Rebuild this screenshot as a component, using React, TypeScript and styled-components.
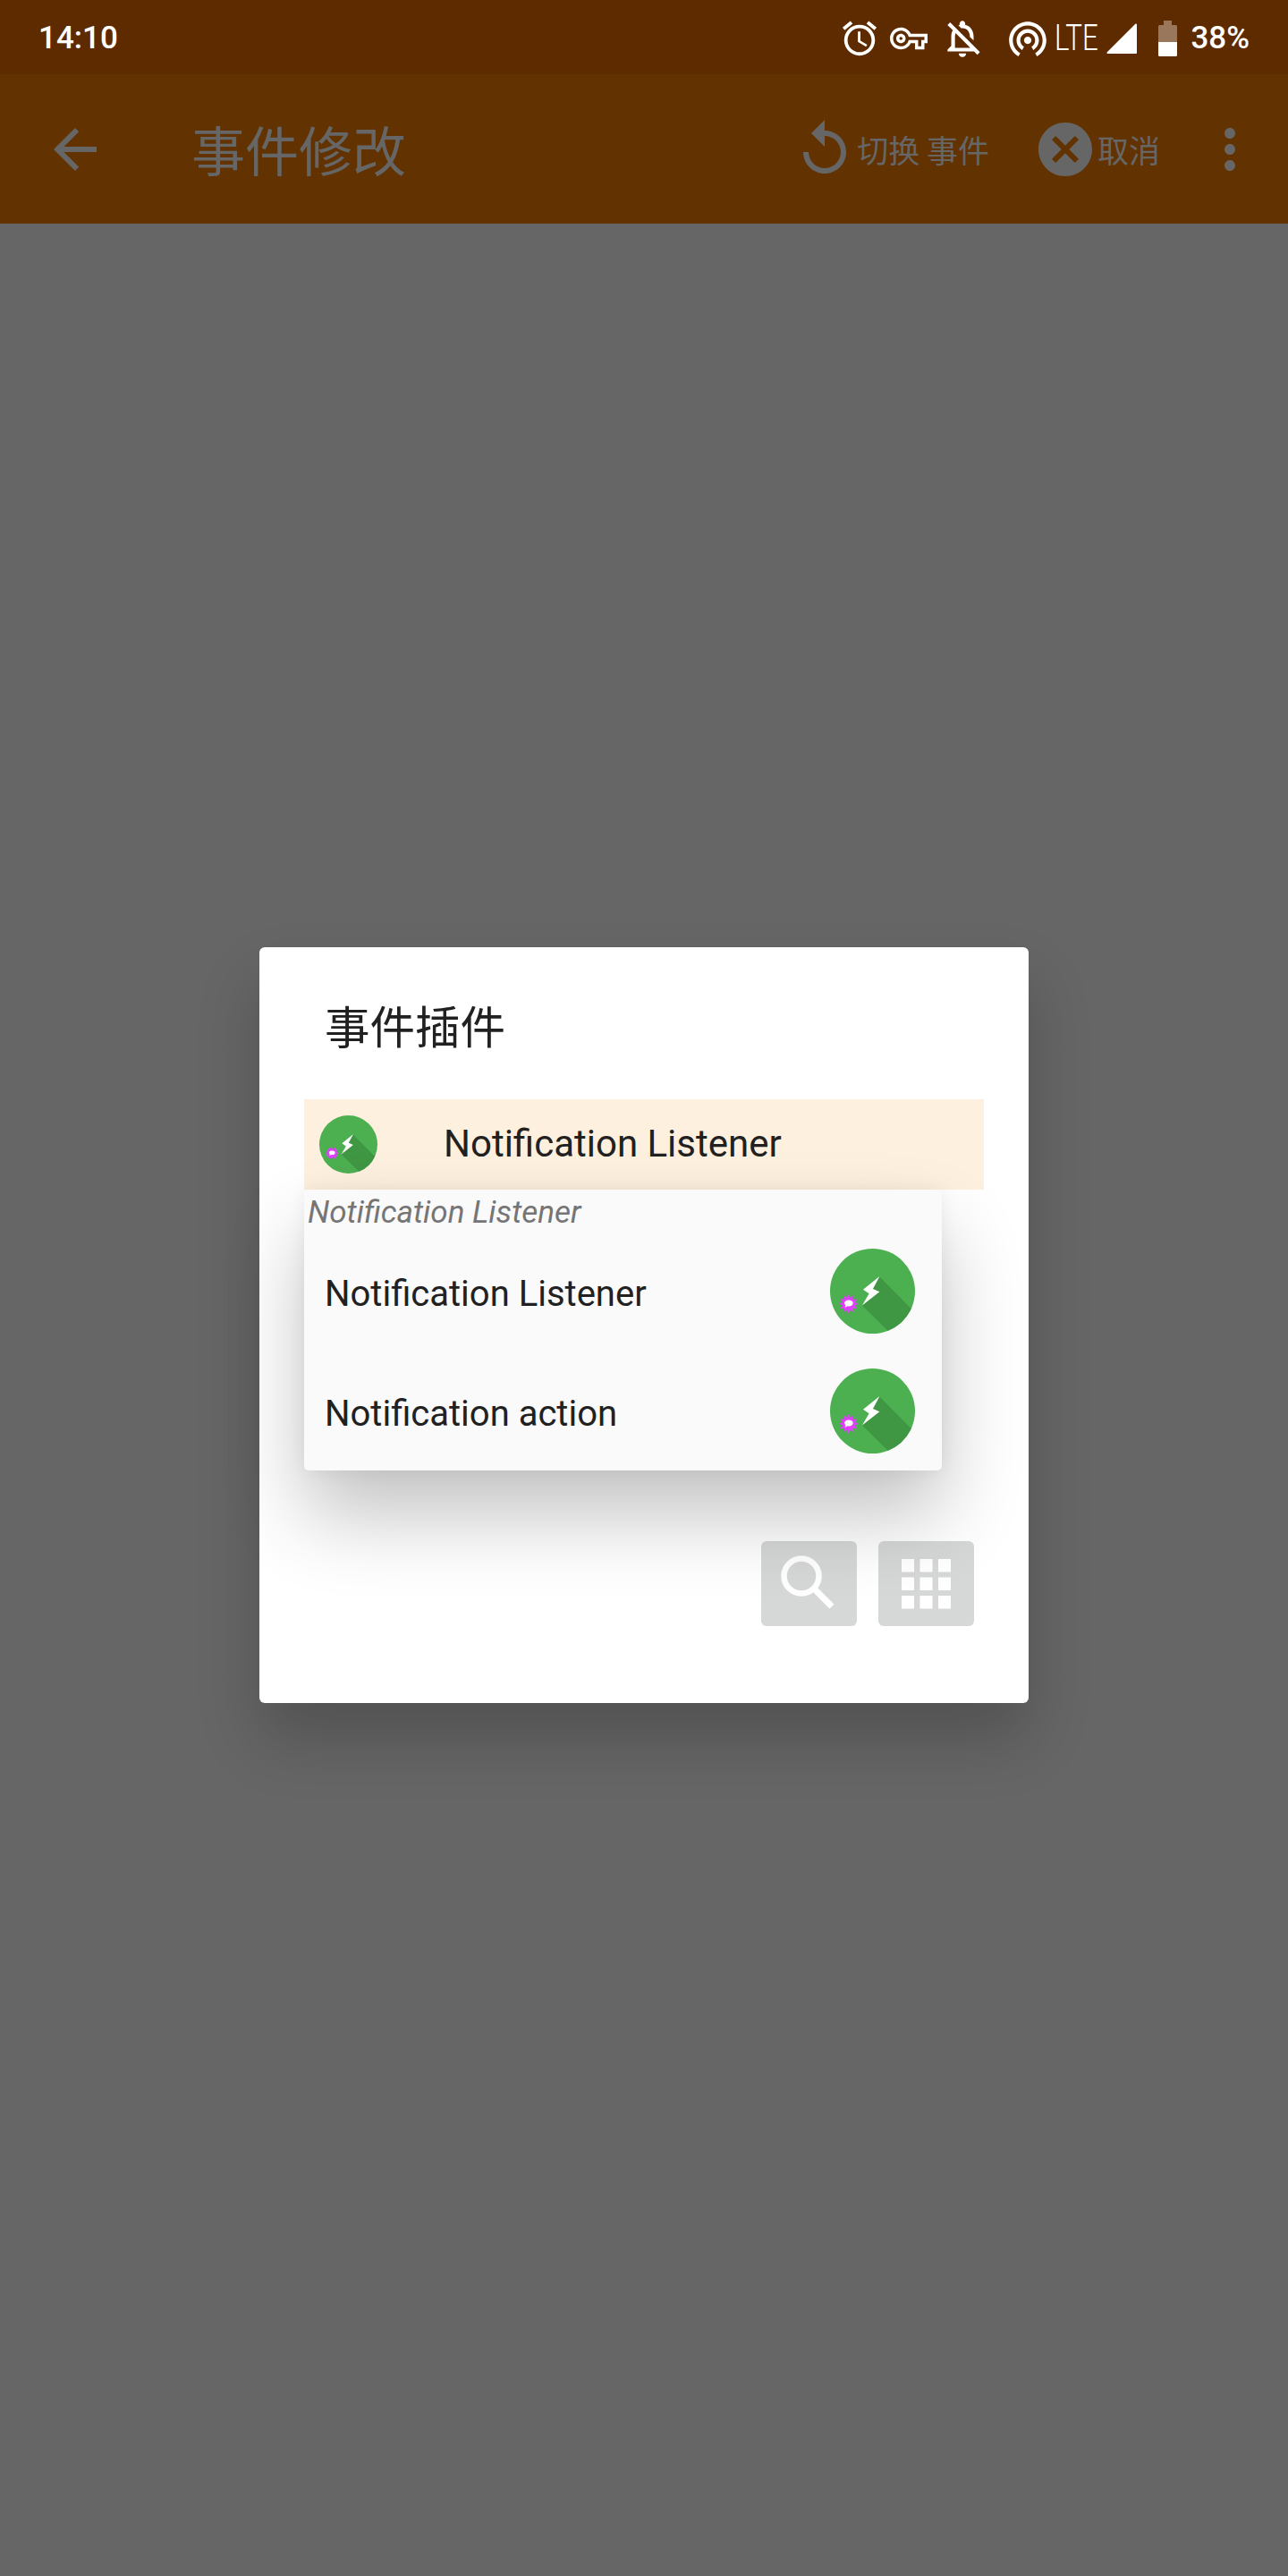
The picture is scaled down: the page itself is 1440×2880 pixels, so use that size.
import styled, { createGlobalStyle } from "styled-components";
import {
  MdArrowBack,
  MdCancel,
  MdMoreVert,
  MdOutlineAlarm,
  MdOutlineNotificationsOff,
  MdOutlineVpnKey,
  MdReplay,
  MdWifiTethering,
} from "react-icons/md";

const CJK = `"Noto Sans CJK SC", "Noto Sans", sans-serif`;

const GlobalStyle = createGlobalStyle`
  * { box-sizing: border-box; }
  html, body { margin: 0; padding: 0; background: #666666; }
  body { font-family: Roboto, "Noto Sans CJK SC", sans-serif; }
`;

const Screen = styled.div`
  width: 1440px;
  height: 2880px;
  background: #666666;
  overflow: hidden;
`;

const StatusBar = styled.div`
  height: 83px;
  background: #5e2b00;
  color: #ffffff;
  display: flex;
  align-items: center;
  padding: 2px 43px 0 43px;
  font-size: 35px;
`;

const Clock = styled.span`
  font-weight: 500;
  flex: 1;
`;

const StatusSlot = styled.span<{ $ml: number; $w: number }>`
  display: flex;
  align-items: center;
  justify-content: center;
  margin-left: ${(p) => p.$ml}px;
  width: ${(p) => p.$w}px;
  height: 81px;
  svg { display: block; flex-shrink: 0; }
`;

const Lte = styled.span`
  display: block;
  font-size: 40px;
  font-weight: 300;
  transform: scaleX(0.78);
  transform-origin: left center;
  width: 48px;
`;

const Percent = styled.span`
  margin-left: 15px;
  font-weight: 500;
`;

const AppBar = styled.div`
  height: 167px;
  background: #623300;
  color: #666666;
  display: flex;
  align-items: center;
  padding: 0 29px 0 48px;
`;

const BarTitle = styled.div`
  flex: 1;
  margin: -2px 0 0 94px;
  font-family: ${CJK};
  font-size: 60px;
  line-height: 1;
`;

const BarAction = styled.div<{ $ml: number }>`
  display: flex;
  align-items: center;
  margin-left: ${(p) => p.$ml}px;
`;

const BarActionLabel = styled.span`
  font-family: ${CJK};
  font-size: 35px;
  white-space: nowrap;
  line-height: 1;
`;

const Stage = styled.div`
  padding: 809px 0 0 290px;
`;

const Dialog = styled.div`
  width: 860px;
  height: 845px;
  background: #ffffff;
  border-radius: 6px;
  box-shadow: 0 40px 70px rgba(0, 0, 0, 0.2);
`;

const DialogTitle = styled.div`
  height: 170px;
  padding: 56px 0 0 73px;
  font-family: ${CJK};
  font-size: 50.5px;
  line-height: 60px;
  color: #212121;
`;

const Field = styled.div`
  position: relative;
  margin: 0 50px;
`;

const SelectedRow = styled.div`
  height: 101px;
  background: #fef0de;
  display: flex;
  align-items: center;
  padding: 0 0 0 17px;
  font-size: 42px;
  color: #212121;
`;

const SelectedLabel = styled.span`
  margin: -3px 0 0 74px;
`;

const Dropdown = styled.div`
  position: absolute;
  top: 100%;
  left: 0;
  width: 713px;
  height: 314px;
  background: #fafafa;
  border-radius: 0 0 5px 5px;
  box-shadow: 0 50px 90px rgba(0, 0, 0, 0.24), 0 0 20px rgba(0, 0, 0, 0.06);
`;

const DropdownCaption = styled.div`
  height: 46px;
  padding-left: 4px;
  font-size: 35px;
  line-height: 52px;
  font-style: italic;
  color: #757575;
`;

const DropdownItem = styled.div`
  height: 134px;
  display: flex;
  align-items: center;
  justify-content: space-between;
  padding: 0 30px 0 23px;
  font-size: 40px;
  color: #212121;
`;

const ItemLabel = styled.span`
  margin-top: 6px;
`;

const Tools = styled.div`
  margin-top: 393px;
  padding-right: 61px;
  display: flex;
  justify-content: flex-end;
  gap: 24px;
`;

const ToolButton = styled.div`
  width: 107px;
  height: 95px;
  background: #d6d8d7;
  border-radius: 6px;
  display: flex;
  align-items: center;
  justify-content: center;
  svg { display: block; }
`;

const burst = Array.from({ length: 24 }, (_, i) => {
  const r = i % 2 === 0 ? 11.7 : 7.6;
  const a = (i * Math.PI) / 12;
  return `${(21.9 + r * Math.sin(a)).toFixed(2)},${(65 - r * Math.cos(a)).toFixed(2)}`;
}).join(" ");

function PluginIcon({ size }: { size: number }) {
  return (
    <svg width={size} height={size} viewBox="0 0 100 100" style={{ flexShrink: 0 }}>
      <circle cx="50" cy="50" r="50" fill="#4caf50" />
      <path d="M58.3 33.2 95.4 70.7A50 50 0 0 1 68.2 96.5L37.8 66.8Z" fill="#3f9643" />
      <polygon points="58.3,32.5 50.5,47.3 58.3,50.9 37.8,66.8 45.9,53 38.9,48.1" fill="#ffffff" />
      <polygon points={burst} fill="#e040fb" />
      <ellipse cx="22" cy="64.2" rx="5" ry="3.6" fill="#ffffff" />
      <polygon points="18.5,65.5 21,67 17.5,69.5" fill="#ffffff" />
    </svg>
  );
}

function SignalIcon() {
  return (
    <svg width="34" height="34" viewBox="0 0 34 34">
      <path d="M33 0.5A1 1 0 0 1 34 1.5V33A1 1 0 0 1 33 34H1.5A1 1 0 0 1 0.8 32.3L32.3 0.8A1 1 0 0 1 33 0.5Z" fill="#ffffff" />
    </svg>
  );
}

function BatteryIcon() {
  return (
    <svg width="21" height="40" viewBox="0 0 21 40">
      <path d="M6 0H15V5H19.5A1.5 1.5 0 0 1 21 6.5V24H0V6.5A1.5 1.5 0 0 1 1.5 5H6Z" fill="#ffffff" fillOpacity="0.36" />
      <path d="M0 24H21V38.5A1.5 1.5 0 0 1 19.5 40H1.5A1.5 1.5 0 0 1 0 38.5Z" fill="#ffffff" />
    </svg>
  );
}

function SearchIcon() {
  return (
    <svg width="107" height="95" viewBox="0 0 107 95" fill="none" stroke="#ffffff" strokeWidth="6.5">
      <circle cx="45" cy="39" r="19.5" />
      <path d="M60 54 79 73" strokeWidth="7" />
    </svg>
  );
}

function GridIcon() {
  const cells = [26, 46.5, 67];
  const rows = [20, 40.5, 61];
  return (
    <svg width="107" height="95" viewBox="0 0 107 95" fill="#ffffff">
      {rows.map((y) =>
        cells.map((x) => <rect key={`${x}-${y}`} x={x} y={y} width="14" height="14.5" />)
      )}
    </svg>
  );
}

export default function App() {
  return (
    <Screen>
      <GlobalStyle />
      <StatusBar>
        <Clock>14:10</Clock>
        <StatusSlot $ml={0} $w={44}>
          <MdOutlineAlarm size={46} />
        </StatusSlot>
        <StatusSlot $ml={13} $w={40}>
          <MdOutlineVpnKey size={42} />
        </StatusSlot>
        <StatusSlot $ml={18} $w={44}>
          <MdOutlineNotificationsOff size={50} />
        </StatusSlot>
        <StatusSlot $ml={27} $w={48}>
          <MdWifiTethering size={50} />
        </StatusSlot>
        <StatusSlot $ml={6} $w={48}>
          <Lte>LTE</Lte>
        </StatusSlot>
        <StatusSlot $ml={10} $w={34}>
          <SignalIcon />
        </StatusSlot>
        <StatusSlot $ml={24} $w={21}>
          <BatteryIcon />
        </StatusSlot>
        <Percent>38%</Percent>
      </StatusBar>

      <AppBar>
        <MdArrowBack size={72} />
        <BarTitle>事件修改</BarTitle>
        <BarAction $ml={0}>
          <MdReplay size={72} />
          <BarActionLabel>切换 事件</BarActionLabel>
        </BarAction>
        <BarAction $ml={49}>
          <MdCancel size={72} />
          <BarActionLabel>取消</BarActionLabel>
        </BarAction>
        <BarAction $ml={42}>
          <MdMoreVert size={72} />
        </BarAction>
      </AppBar>

      <Stage>
        <Dialog>
          <DialogTitle>事件插件</DialogTitle>
          <Field>
            <SelectedRow>
              <PluginIcon size={65} />
              <SelectedLabel>Notification Listener</SelectedLabel>
            </SelectedRow>
            <Dropdown>
              <DropdownCaption>Notification Listener</DropdownCaption>
              <DropdownItem>
                <ItemLabel>Notification Listener</ItemLabel>
                <PluginIcon size={95} />
              </DropdownItem>
              <DropdownItem>
                <ItemLabel>Notification action</ItemLabel>
                <PluginIcon size={95} />
              </DropdownItem>
            </Dropdown>
          </Field>
          <Tools>
            <ToolButton>
              <SearchIcon />
            </ToolButton>
            <ToolButton>
              <GridIcon />
            </ToolButton>
          </Tools>
        </Dialog>
      </Stage>
    </Screen>
  );
}
